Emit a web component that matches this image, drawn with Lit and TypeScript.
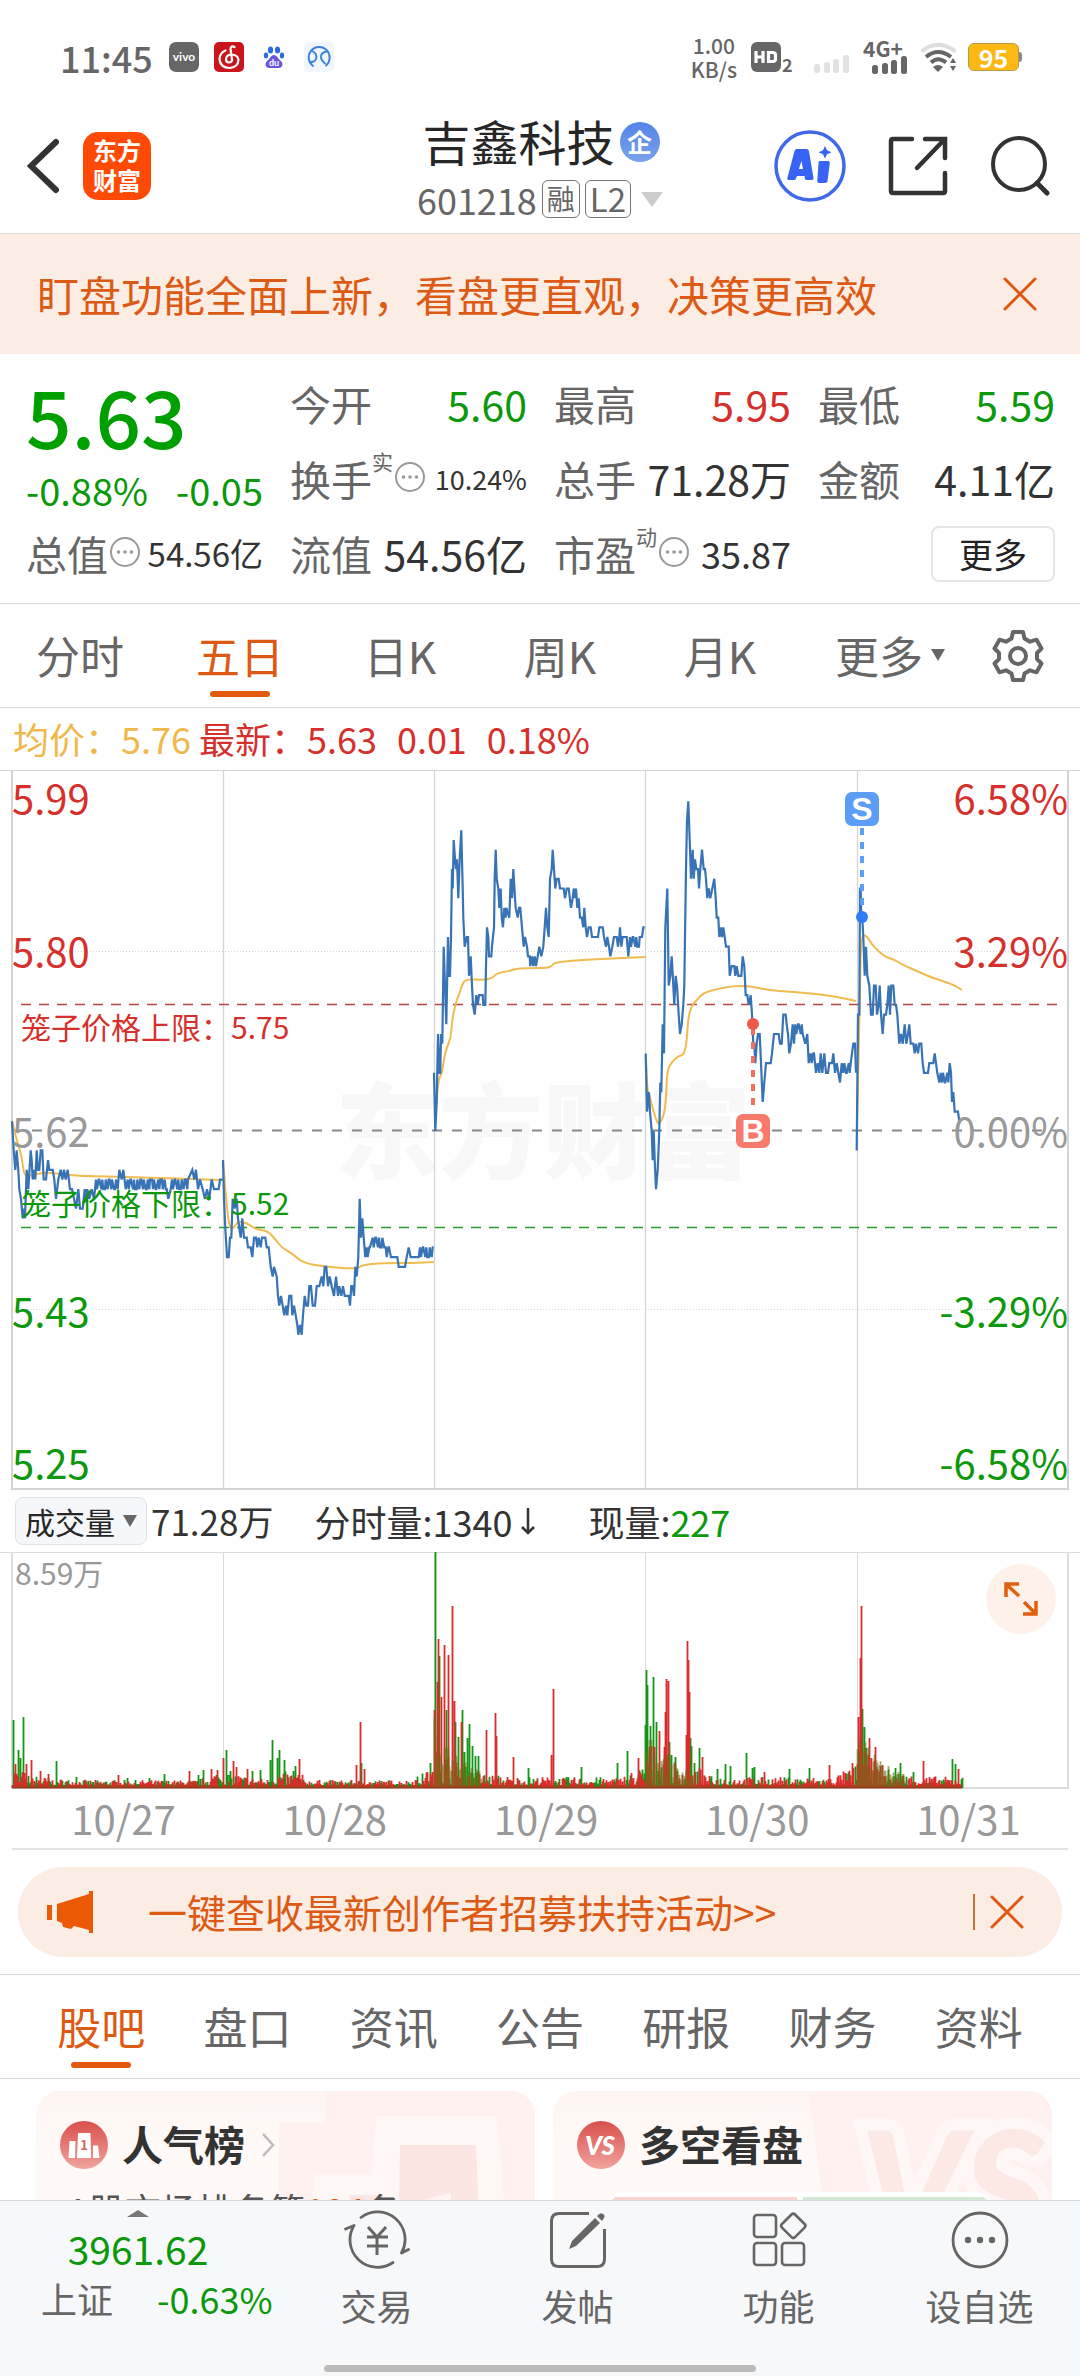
import { LitElement, html, svg, css } from "lit";
import { customElement } from "lit/decorators.js";
import { classMap } from "lit/directives/class-map.js";

interface Run {
  /** left edge of the run on the chart, in px */
  at: number;
  /** "x,tick" pairs, x in thirds of a px; "a~b,hi/lo" swings between two ticks */
  ticks: string;
}

const ZERO_Y = 361;
const TICK = 9.7;
const RED = "#d92b2b";

const DAYS: Run[][] = [
  [{ at: 0, ticks: "36,1 41,-2 46,-4 50,-2 55,-4 58,-6 63,-7 68,-9 72,-8 75,-9 80,-4 85,-6 92,-2 95,-3 98,-5 103,-4 106,-5 110,-2 114,-4 118,-4 122,-2 127,-2 131,-5 138,-5 144,-3 148,-4 158,-4 163,-5 168,-7 175,-5 182,-4 187,-5 192,-4 197,-5 203,-4 210,-6 216,-6 222,-7 228,-8 235,-6 240,-8 248,-8 254,-6 258,-7 262,-6 268,-7 275,-6 282,-7 288~354,-5/-6 358,-4 365,-5 370,-4 377,-6 383~500,-5/-6 505,-7 512,-6 516~568,-5/-6 577,-4 583,-5 588,-4 594,-6 600,-5 608,-6 615,-7 621,-6 628,-7 635,-5 642,-6 656,-6 660,-5 668,-5" }],
  [{ at: 0, ticks: "669,-3 672,-7 676,-10 681,-13 686,-13 690,-11 694,-11 698,-7 704,-8 710,-7 714,-9 718,-10 722,-11 727,-9 732,-11 740,-11 744,-12 752,-12 757,-13 762,-11 768,-11 772,-12 776,-11 782,-12 786,-11 796,-11 800,-12 806,-12 812,-14 818,-15 822,-14 830,-15 834,-17 838,-18 843,-17 848,-18 853,-19 858,-18 862,-19 868,-17 874,-17 877,-19 882,-18 887,-19 892,-20 895,-21 900,-20 905,-21 909,-19 914,-17 919,-18 924,-18 928,-16 933,-16 938,-18 945,-18 950,-16 958,-16 965,-15 970,-16 974,-14 979,-14 984,-16 989,-15 995,-16 1002,-17 1008,-15 1014,-17 1018,-16 1024,-17 1029,-16 1034,-17 1046,-17 1050,-18 1054,-16 1058,-16 1062,-17 1066,-14 1070,-15 1075,-13 1079,-7 1083,-11 1087,-9 1091,-11 1096,-13 1100~1114,-12/-13 1118~1154,-11/-12 1157~1174,-12/-13 1192,-13 1196,-14 1215,-14 1220,-13 1226,-12 1232,-13 1256,-13 1260~1302,-12/-13" }],
  [{ at: 400, ticks: "102,6 106,0 110,3 114,10 118,6 121,6 123,10 127,9 131,19 135,15 139,11 144,20 147,16 150,16 153,20 156,27 158,25 161,30 165,28 168,27 171,28 175,24 179,28 184,31 188,25 190,22 194,19 200,20 204,20 207,16 212,18 216,15 219,13 224,12 229,14 233,13 237,14 248,14 250,13 256,13 258,17 261,21 265,20 267,18 274,18 276,19 282,21 284,26 287,29 290,26 295,25 298,23 302,25 305,22 309,21 313,23 317,22 319,23 328,22 332,26 336,24 340,27 345,24 347,23 353,22 357,23 361,23 366,21 371,19 375,20 381,19 384,18 389,18 391,17 396,18 400,17 404,18 408,17 413,18 418,19 424,18 430,19 434,21 438,23 442,21 446,20 450,26 455,27 458,29 462,27 466,25 470,26 476,26 480,25 491,25 495,24 500,25 506,25 513,23 518,24 521,25 525,24 528,25 532,23 536,24 540,22 545,22 550,21 553,23 557,21 561,20 566,21 572,21 576,20 594,20 598,21 608,21 612,20 618,19 622,20 627,19 631,18 637,19 642,20 650,20 654,19 658,20 660,21 664,19 668,20 680,20 685,18 690~722,20/19 726,20 730,21 734,21" }],
  [
    { at: 400, ticks: "737,8 741,2 744,3 747,4 750,2 755,0 758,-3 761,0 764,-3 768,-6 773,-4 778,0 781,5 784,4 788,11 792,8 796,21 802,25 806,15 811,16 815,18 820,15 823,13 827,16 831,15 836,12 840,10 845,11 850,13 853,15 858,27 861,32 865,34 869,30 873,26 878,29 881,26 885,28 889,27 894,27 897,25 901,27 906,29 911,27 915,27 918,26 922,24 926,25 931,24 937,25 943,26 947,24 950,22 955,22 958,20 962,21 966,20 970,21 974,20 978,19 986,19 989,16 995,17 1003,17 1006,16 1010,17 1015,16 1020,16" },
    { at: 700, ticks: "124,16 128,18 133,17 137,14 142,14 146,13 152,14 156,12 160,9 163,9 166,7 170,9 174,10 179,10 183,7 188,3 193,5 198,7 212,7 216,8 222,10 236,10 240,9 245,9 250,12 257,12 260,11 264,10 268,8 273,9 278,11 282,9 286~312,11/10 316,9 322,10 326,7 332~345,8/7 348,6 353,7 358,6 362,8 367,6 373,8 378,6 384,6 388,7 396,7 400,8 405,6 410,7 415,6 420,5 425,7 430~456,6/7 460,9 465,9 468,6" },
  ],
  [{ at: 700, ticks: "470,-2 474,12 478,12 480,25 482,25 484,22 487,22 490,20 494,16 498,19 502,16 508,15 513,12 518,12 522,15 527,15 531,12 536,13 539,15 543,12 548,10 552,12 558,12 562,13 566,15 570,12 574,15 580,15 584,13 588,13 592,12 598,9 603,10 608,9 614,11 619,9 624,10 628,11 632,9 640,9 644,8 648,9 654,8 658,9 664,9 668,7 672,6 684,6 688,7 700,7 704,8 708,7 712,6 718,5 722,6 726~745,5/6 749,7 753,6 756,3 760,4 764,2 774,2 778,1" }],
];

const AVERAGES = [
  "12,351 16,368 22,387 24,406 30,406 45,402 60,404 80,406 133,407 187,409 223,410",
  "223,390 227,441 230,459 234,458 238,451 247,453 255,459 268,461 275,469 282,478 293,484 303,493 327,497 357,499 362,495 383,493 413,493 434,492",
  "435,356 437,323 439,308 442,303 445,282 451,268 452,250 456,232 460,222 463,212 468,209 483,210 493,208 497,203 510,201 515,199 527,198 547,198 552,196 554,193 567,191 600,189 645,187",
  "646,288 647,320 650,327 653,340 657,352 659,354 663,348 666,333 667,300 672,292 678,286 684,285 687,270 688,248 692,235 697,230 703,223 717,219 733,216 750,216 767,220 807,223 833,226 856,231",
  "857,363 860,222 861,167 865,165 868,168 873,176 885,187 893,189 903,195 917,201 930,207 952,214 962,220",
];

/** Peak volumes: x, height, r(ise) or g(fall) */
const PEAKS =
  "13,68,g 15,24,r 18,38,g 20,30,g 23,71,g 26,24,r 31,28,r 40,17,r 48,14,r 56,27,g 76,11,g 118,13,r 127,10,g 149,10,g 164,14,g 189,17,r 198,13,g 203,18,g 211,19,r 217,18,r 223,30,r 226,38,g 233,27,r 236,21,r 247,19,r 252,17,g 260,18,g 270,28,g 272,48,g 277,30,g 279,38,g 284,28,g 293,17,g 295,22,g 299,29,r 356,23,r 360,66,r 361,25,g 364,19,r 427,16,r 430,25,g 434,78,r 435,236,g 437,106,r 438,149,r 439,132,g 441,91,r 444,143,r 446,78,g 448,133,r 452,182,r 454,87,r 455,66,g 458,51,g 461,66,r 462,78,g 464,36,g 467,50,g 469,64,g 472,42,g 475,32,g 478,32,g 486,58,r 495,75,r 496,52,r 513,31,r 528,20,g 551,33,r 553,99,r 581,21,g 617,25,g 627,37,g 638,30,r 645,63,g 646,118,g 647,103,g 650,62,g 653,111,g 654,41,r 656,66,g 659,57,r 664,41,r 665,76,r 666,109,r 668,107,r 669,46,g 671,33,g 675,31,g 686,53,r 687,147,r 688,128,r 689,96,r 690,50,g 691,42,g 694,25,g 699,40,g 702,31,r 717,19,g 725,24,g 730,22,g 746,35,g 752,20,g 754,21,g 764,16,r 789,19,g 809,20,g 829,23,r 852,25,r 858,71,r 860,130,r 861,182,r 862,79,g 864,61,g 866,40,g 869,50,r 871,30,r 875,41,r 882,23,r 895,20,g 900,25,g 913,16,g 923,27,r 952,29,g 955,24,g 958,19,r";

const DAY_STARTS = [12, 223, 434, 646, 857];

function pricePath(runs: Run[]): string {
  const pts: string[] = [];
  const put = (x: number, k: number) => pts.push(`${x.toFixed(1)} ${(ZERO_Y - k * TICK).toFixed(1)}`);
  for (const run of runs) {
    for (const token of run.ticks.split(" ")) {
      const [pos, level] = token.split(",");
      if (pos.includes("~")) {
        const [from, to] = pos.split("~").map(Number);
        const [a, b] = level.split("/").map(Number);
        let high = true;
        let i = 0;
        for (let x = from; x <= to; x += [3, 5, 2, 6, 3][i++ % 5]) {
          put(run.at + x / 3, high ? a : b);
          if (i % 4 !== 2) high = !high;
        }
      } else {
        put(run.at + Number(pos) / 3, Number(level));
      }
    }
  }
  return "M" + pts.join("L");
}

function smoothPath(data: string): string {
  const p = data.split(" ").map((s) => s.split(",").map(Number));
  let d = `M${p[0][0]} ${p[0][1]}`;
  for (let i = 1; i < p.length - 1; i++) {
    d += `Q${p[i][0]} ${p[i][1]} ${(p[i][0] + p[i + 1][0]) / 2} ${(p[i][1] + p[i + 1][1]) / 2}`;
  }
  const last = p[p.length - 1];
  return d + `L${last[0]} ${last[1]}`;
}

function volumePaths(): { rise: string; fall: string; mixed: string } {
  let seed = 7;
  const rnd = () => (seed = (seed * 16807) % 2147483647) / 2147483647;
  const out = { rise: "", fall: "", mixed: "" };
  const weight = [16, 13, 50, 34, 40];
  for (let x = 12; x < 963; x += 1) {
    const day = DAY_STARTS.filter((s) => s <= x).length - 1;
    const t = x - DAY_STARTS[day];
    const late = t > 185 ? (t - 185) / 2 : 0;
    const swell = (day === 1 && t > 44 && t < 80) || (day === 3 && t < 55) ? 8 : 0;
    const base = day > 1 ? 8 : 5;
    const cap = base + weight[day] * Math.exp(-t / 20) + late + swell;
    const h = 3 + cap * Math.pow(rnd(), 1.7);
    out[rnd() > 0.45 ? "rise" : "fall"] += `M${x + 0.5} 236v${-h.toFixed(1)}`;
    if (t < 48 && day > 1) out.mixed += `M${x + 0.5} 236v${-(h * 0.8 + weight[day] * 0.5 * Math.exp(-t / 30)).toFixed(1)}`;
  }
  for (const item of PEAKS.split(" ")) {
    const [x, h, c] = item.split(",");
    out[c === "r" ? "rise" : "fall"] += `M${Number(x) + 0.5} 236v-${h}`;
  }
  return out;
}

const VOLUME = volumePaths();

const closeIcon = html`<svg class="close-icon" viewBox="0 0 34 34" aria-hidden="true">
  <path d="M2 2L32 32M32 2L2 32" fill="none" stroke="#e0570f" stroke-width="3" stroke-linecap="round" />
</svg>`;

const moreDots = html`<svg class="dots" viewBox="0 0 30 30" aria-hidden="true">
  <circle cx="15" cy="15" r="14" fill="none" stroke="#999" stroke-width="2" />
  <circle cx="8.5" cy="15" r="1.8" fill="#999" /><circle cx="15" cy="15" r="1.8" fill="#999" /><circle cx="21.5" cy="15" r="1.8" fill="#999" />
</svg>`;

const caret = html`<svg class="caret" viewBox="0 0 14 12" aria-hidden="true"><path d="M0 0h14L7 12z" fill="#666" /></svg>`;

const signal = (color: string) => html`<svg class="signal" viewBox="0 0 36 18" aria-hidden="true">
  <g fill=${color}><rect x="0" y="9" width="6" height="9" rx="2.5" /><rect x="10" y="7" width="6" height="11" rx="2.5" /><rect x="19" y="4" width="6" height="14" rx="2.5" /><rect x="29" y="0" width="6" height="18" rx="2.5" /></g>
</svg>`;

@customElement("status-bar")
class StatusBar extends LitElement {
  static styles = css`
    :host { display: flex; justify-content: space-between; align-items: center; height: 118px; padding: 0 58px 4px 60px; box-sizing: border-box; color: #666; }
    .group { display: flex; align-items: center; }
    .time { font-size: 36px; line-height: 54px; font-weight: 500; margin-right: 16px; }
    .app { width: 30px; height: 30px; margin-right: 15px; }
    .rate { font-size: 21px; line-height: 24px; font-weight: 500; text-align: center; margin-right: 14px; }
    .hd { width: 44px; height: 31px; margin-right: 19px; }
    .signal { display: block; width: 36px; height: 18px; }
    .idle { align-self: flex-end; margin: 0 13px 8px 0; }
    .mobile { margin-right: 12px; font-size: 21px; line-height: 16px; font-weight: 700; }
    .mobile .signal { margin-left: 9px; }
    .wifi { width: 38px; height: 30px; margin-right: 10px; }
    .battery { background: #fdb913; color: #fff; border-radius: 6px; width: 51px; height: 28px; line-height: 26px; font-size: 25px; font-weight: 700; text-align: center; border: 1px solid #b99a4a; box-sizing: border-box; }
    .cap { width: 3px; height: 10px; background: #888; border-radius: 0 3px 3px 0; }
  `;
  render() {
    return html`
      <div class="group">
        <span class="time">11:45</span>
        <svg class="app" viewBox="0 0 30 30"><rect width="30" height="30" rx="7" fill="#666" /><text x="15" y="19" font-size="12" font-weight="700" font-family="Lato, sans-serif" fill="#fff" text-anchor="middle">vivo</text></svg>
        <svg class="app" viewBox="0 0 30 30"><rect width="30" height="30" rx="5" fill="#c9151b" /><path d="M20.500 5Q17 3 16.500 7L18 17.500Q18 20.500 15 20.500Q12 20.300 12 17.500Q12 13 17 12.500Q24 12.500 24.500 18Q24 25.500 15.500 26Q6.500 25.500 5.500 17.500Q5.500 11 11.500 8.500" fill="none" stroke="#fff" stroke-width="2.200" stroke-linecap="round" /></svg>
        <svg class="app" viewBox="0 0 30 30"><g fill="#2a6be0"><ellipse cx="11.500" cy="8" rx="2.600" ry="3.500" /><ellipse cx="18.500" cy="8" rx="2.600" ry="3.500" /><ellipse cx="7" cy="13.500" rx="2.200" ry="3" /><ellipse cx="23" cy="13.500" rx="2.200" ry="3" /></g><path d="M15 13c3 0 4 4 7 6 3 3 1 7-2 7H10c-3 0-5-4-2-7 3-2 4-6 7-6z" fill="#6a55dd" /><text x="15" y="24" font-size="9" font-weight="700" font-family="Lato, sans-serif" fill="#fff" text-anchor="middle">du</text></svg>
        <svg class="app" viewBox="0 0 30 30"><rect width="30" height="30" rx="5" fill="#f1f6fd" /><g fill="none" stroke="#3b82dc" stroke-width="1.900" stroke-linecap="round"><path d="M9 24A10.500 10.500 0 1 1 22 23.500" /><path d="M7.500 8.500Q14 12 12 17Q10.500 20.500 6.500 20M22.500 9.500Q16 11 17 16Q17.500 19 21 21.500" /></g></svg>
      </div>
      <div class="group">
        <span class="rate">1.00<br />KB/s</span>
        <svg class="hd" viewBox="0 0 44 31"><rect width="30" height="30" rx="6" fill="#666" /><path d="M5 9v12M12 9v12M5 15h7M17.500 10.500v9h4q3 0 3-2.500v-4q0-2.500-3-2.500z" fill="none" stroke="#fff" stroke-width="3.200" /><text x="31" y="30" font-size="18" font-weight="700" fill="#666">2</text></svg>
        <span class="idle">${signal("#e2e2e2")}</span>
        <span class="mobile">4G+${signal("#666")}</span>
        <svg class="wifi" viewBox="0 0 38 30"><g fill="none" stroke-width="4"><path d="M1.500 9.500Q18 -4 35.500 9.500" stroke="#dedede" /><path d="M6 15Q18 5 31 15M11 20.500Q18 14 26 20.500" stroke="#666" /></g><path d="M13 25q5-4 10 0l-5 5zM30 21l3-5 3 5zM30 24l3 5 3-5z" fill="#666" /></svg>
        <span class="battery">95</span><span class="cap"></span>
      </div>
    `;
  }
}

@customElement("stock-header")
class StockHeader extends LitElement {
  static styles = css`
    :host { display: grid; grid-template-columns: 1fr auto 1fr; padding: 0 27px 15px; border-bottom: 1px solid #d9d9d9; }
    button { font: inherit; color: inherit; border: 0; padding: 0; background: none; display: block; }
    svg { display: block; }
    .side { display: flex; align-items: center; height: 96px; }
    .right { justify-content: flex-end; gap: 42px; padding-right: 3px; }
    .back svg { width: 33px; height: 56px; }
    .logo { margin-left: 23px; width: 68px; height: 68px; box-sizing: border-box; padding: 3px 10px; border-radius: 15px; background: #ff4a05; color: #fff; font-size: 24px; line-height: 30px; font-weight: 700; text-decoration: none; }
    h1 { margin: 0; font-size: 48px; line-height: 44px; font-weight: 400; color: #262626; display: flex; align-items: center; justify-content: center; padding-left: 2px; }
    .ent { margin-left: 5px; width: 40px; height: 40px; margin-top: 3px; border-radius: 50%; background: linear-gradient(#5583e8, #7aa2ec); color: #fff; font-size: 25px; line-height: 38px; text-align: center; font-weight: 700; }
    .sub { margin-top: 18px; display: flex; align-items: center; justify-content: center; font-size: 36px; line-height: 38px; color: #666; }
    .tag { border: 1px solid #777; border-radius: 6px; height: 36px; line-height: 34px; font-size: 28px; padding: 0 4px; margin-left: 5px; }
    .latin { font-size: 33px; }
    .drop { width: 22px; height: 15px; margin-left: 10px; }
    .ai { width: 72px; height: 72px; }
    .share, .find { width: 60px; height: 60px; }
  `;
  render() {
    return html`
      <div class="side">
        <button class="back" aria-label="返回"><svg viewBox="0 0 33 56"><path d="M29 4L4 28L29 52" fill="none" stroke="#333" stroke-width="6" stroke-linecap="round" stroke-linejoin="miter" /></svg></button>
        <a class="logo" href="#">东方财富</a>
      </div>
      <div>
        <h1>吉鑫科技<span class="ent">企</span></h1>
        <div class="sub">601218<span class="tag">融</span><span class="tag latin">L2</span>
          <svg class="drop" viewBox="0 0 22 15"><path d="M0 0h22L11 15z" fill="#ccc" /></svg></div>
      </div>
      <div class="side right">
        <button aria-label="Ai"><svg class="ai" viewBox="0 0 72 72"><circle cx="36" cy="36" r="34" fill="none" stroke="#4069ea" stroke-width="3.500" />
          <path d="M22.500 19h10q2 0 2.400 2L39.500 48q.3 2-1.500 2h-5.500q-1.500 0-1.700-2l-.3-2H23l-1 2.500Q21.500 50 20 50h-5q-2.500 0-1.500-2.500L20.500 21q.6-2 2-2zM27.500 31L24.800 39H29zM46 31h8q2 0 1.800 2L53.500 51q-.3 2-2.300 2H45q-2 0-1.700-2L44.500 33q.2-2 1.500-2zM51 16l2 4.300 4.500 2-4.500 2L51 28.500l-2-4.200-4.500-2 4.500-2z" fill="#3764f4" fill-rule="evenodd" /></svg></button>
        <button aria-label="分享"><svg class="share" viewBox="0 0 60 60"><path d="M24 3H5Q3 3 3 5V55Q3 57 5 57H55Q57 57 57 55V37M57 22V3H37M55 5L29 32" fill="none" stroke="#333" stroke-width="4.500" stroke-linecap="round" /></svg></button>
        <button aria-label="搜索"><svg class="find" viewBox="0 0 60 60"><circle cx="29" cy="28" r="26" fill="none" stroke="#333" stroke-width="4" /><path d="M47 47L57 57" stroke="#333" stroke-width="5" stroke-linecap="round" /></svg></button>
      </div>
    `;
  }
}

@customElement("quote-panel")
class QuotePanel extends LitElement {
  static styles = css`
    :host { display: grid; grid-template-columns: repeat(4, 1fr); grid-auto-rows: 75px; column-gap: 27px; padding: 12px 25px 12px 26px; border-bottom: 1px solid #d9d9d9; }
    .price { grid-row: span 2; display: flex; flex-direction: column; color: #0b980b; }
    .last { font-size: 80px; line-height: 96px; font-weight: 500; color: #009f00; }
    .change { display: flex; justify-content: space-between; font-size: 38px; line-height: 56px; white-space: nowrap; }
    .cell { display: flex; align-items: center; justify-content: space-between; font-size: 41px; line-height: 73px; color: #333; white-space: nowrap; }
    .label { display: flex; align-items: center; color: #666; }
    .note { font-size: 21px; line-height: 24px; align-self: flex-start; margin: 7px 0 0; }
    .dots { width: 30px; height: 30px; margin-left: 2px; margin-bottom: 4px; }
    .mid { font-size: 36px; } .small { font-size: 33px; } .tiny { font-size: 27px; }
    .up { color: #d6302d; } .down { color: #0b980b; }
    .more { justify-self: end; align-self: center; width: 124px; height: 56px; padding: 0; border: 2px solid #e6e6e6; border-radius: 8px; background: #fff; color: #222; font: inherit; font-size: 34px; line-height: 48px; }
  `;
  private cell(label: string, value: string, tone = "", note = "", dots = false) {
    return html`<div class="cell"><span class="label">${label}${note ? html`<span class="note">${note}</span>` : ""}${dots ? moreDots : ""}</span><span class=${tone}>${value}</span></div>`;
  }
  render() {
    return html`
      <div class="price"><span class="last">5.63</span><span class="change"><span>-0.88%</span><span>-0.05</span></span></div>
      ${this.cell("今开", "5.60", "down")} ${this.cell("最高", "5.95", "up")} ${this.cell("最低", "5.59", "down")}
      ${this.cell("换手", "10.24%", "tiny", "实", true)} ${this.cell("总手", "71.28万")} ${this.cell("金额", "4.11亿")}
      ${this.cell("总值", "54.56亿", "small", "", true)} ${this.cell("流值", "54.56亿")} ${this.cell("市盈", "35.87", "mid", "动", true)}
      <button class="more">更多</button>
    `;
  }
}

@customElement("price-chart")
class PriceChart extends LitElement {
  static styles = css`
    :host { display: block; }
    svg { display: block; width: 100%; height: auto; font-size: 40px; }
    .mark { font-size: 104px; font-weight: 900; fill: #f8f8f8; }
    .cage { font-size: 30px; }
    .pin { font-size: 32px; font-weight: 700; fill: #fff; font-family: "Liberation Sans", sans-serif; }
    .up { fill: #d6302d; } .down { fill: #0b980b; } .flat { fill: #999; }
  `;
  render() {
    const scale: [number, string, string, string][] = [
      [44, "5.99", "6.58%", "up"], [197, "5.80", "3.29%", "up"], [377, "5.62", "0.00%", "flat"],
      [557, "5.43", "-3.29%", "down"], [709, "5.25", "-6.58%", "down"],
    ];
    return html`<svg viewBox="0 0 1080 720" role="img" aria-label="五日">
      <text class="mark" x="543" y="401" text-anchor="middle">东方财富</text>
      <g stroke="#d4d4d4" fill="none">
        <path d="M0 .5H1080" /><path d="M12 .5V719H1068V.5" stroke-width="2" />
        <path d="M223.500 1V719M434.500 1V719M645.500 1V719M857.500 1V719" stroke-width="1.300" />
        <path d="M12 181.500H1068M12 539.500H1068" stroke-dasharray="1 2" />
      </g>
      <path d="M12 360.500H1062" stroke="#888" stroke-width="1.800" stroke-dasharray="10 10" />
      <path d="M21 234.500H1058" stroke="#b8433f" stroke-width="1.500" stroke-dasharray="10 8" />
      <path d="M21 457.500H1058" stroke="#2c9a2c" stroke-width="1.500" stroke-dasharray="10 8" />
      <g fill="none" stroke="#f0bb4f" stroke-width="2">${AVERAGES.map((a) => svg`<path d=${smoothPath(a)} />`)}</g>
      <g fill="none" stroke="#3873b5" stroke-width="2.200">${DAYS.map((d) => svg`<path d=${pricePath(d)} />`)}</g>
      ${scale.map(([y, l, r, tone]) => svg`<text class=${tone} x="12" y=${y}>${l}</text><text class=${tone} x="1068" y=${y} text-anchor="end">${r}</text>`)}
      <text class="cage up" x="21" y="269">笼子价格上限：5.75</text>
      <text class="cage down" x="21" y="445">笼子价格下限：5.52</text>
      <path d="M862 58V146" stroke="#5c9df8" stroke-width="4" stroke-dasharray="7 7" />
      <circle cx="862" cy="147" r="6" fill="#2b7cf6" />
      <rect x="845" y="22" width="34" height="34" rx="7" fill="#5c9df8" /><text class="pin" x="862" y="50" text-anchor="middle">S</text>
      <path d="M753 258V342" stroke="#f2705f" stroke-width="4" stroke-dasharray="7 7" />
      <circle cx="753" cy="254" r="6" fill="#f0594a" />
      <rect x="736" y="344" width="34" height="34" rx="7" fill="#f77a6a" /><text class="pin" x="753" y="372" text-anchor="middle">B</text>
    </svg>`;
  }
}

@customElement("volume-chart")
class VolumeChart extends LitElement {
  static styles = css`
    :host { display: block; }
    button { font: inherit; padding: 0; }
    .row { display: flex; align-items: center; height: 62px; padding: 0 15px; font-size: 36px; line-height: 60px; color: #333; white-space: nowrap; }
    .row > * { flex: none; }
    .kind { display: flex; align-items: center; justify-content: center; gap: 8px; width: 132px; height: 48px; box-sizing: border-box; margin-right: 4px; border: 1px solid #dfe3e8; border-radius: 8px; background: #f5f7fa; color: #262626; font-size: 30px; line-height: 44px; }
    .caret { width: 14px; height: 12px; }
    .total { font-size: 35px; }
    .minute { margin-left: 41px; }
    .now { margin-left: 52px; }
    .fall { width: 16px; height: 28px; margin-left: 8px; }
    .down { color: #0b980b; }
    .plot { position: relative; }
    .plot > svg { display: block; width: 100%; height: auto; }
    .top { font-size: 30px; fill: #999; }
    .expand { position: absolute; top: 12px; right: 24px; width: 70px; height: 70px; border: 0; border-radius: 50%; background: #fef1e9; display: flex; align-items: center; justify-content: center; }
    .expand svg { width: 34px; height: 36px; }
    .dates { display: grid; grid-template-columns: repeat(5, 1fr); margin: 0 12px; height: 58px; line-height: 56px; font-size: 40px; color: #999; text-align: center; border-bottom: 2px solid #e2e2e2; }
    .dates span { padding-left: 12px; }
  `;
  render() {
    return html`
      <div class="row">
        <button class="kind">成交量${caret}</button><span class="total">71.28万</span>
        <span class="minute">分时量:1340</span>
        <svg class="fall" viewBox="0 0 16 28"><path d="M8 1V26M2 20L8 26L14 20" fill="none" stroke="#333" stroke-width="2.500" /></svg>
        <span class="now">现量:<span class="down">227</span></span>
      </div>
      <div class="plot">
        <svg viewBox="0 0 1080 238" role="img" aria-label="成交量">
          <g fill="none" stroke="#dcdcdc"><path d="M0 .5H1080" /><path d="M12 0V236H1068V0" stroke-width="2" /><path d="M223.500 0V236M434.500 0V236M645.500 0V236M857.500 0V236" /></g>
          <g fill="none" stroke-width="1.800">
            <path d=${VOLUME.fall} stroke="#149414" />
            <path d=${VOLUME.rise} stroke=${RED} />
            <path d=${VOLUME.mixed} stroke="#6f6a14" stroke-opacity=".6" />
          </g>
          <path d="M12 235.500H962" stroke="#9a3a1c" stroke-width="2" />
          <text class="top" x="15" y="33">8.59万</text>
        </svg>
        <button class="expand" aria-label="全屏"><svg viewBox="0 0 34 36"><path d="M2 16V3H15M3 4L15 15M32 20V33H19M31 32L20 21" fill="none" stroke="#e0600f" stroke-width="3.500" /></svg></button>
      </div>
      <div class="dates">${["10/27", "10/28", "10/29", "10/30", "10/31"].map((d) => html`<span>${d}</span>`)}</div>
    `;
  }
}

@customElement("insight-cards")
class InsightCards extends LitElement {
  static styles = css`
    :host { display: grid; grid-template-columns: 1fr 1fr; gap: 18px; padding: 12px 28px 0 36px; }
    .card { position: relative; height: 240px; border-radius: 24px; overflow: hidden; background: linear-gradient(#fef5f3, #fffaf7 60px); }
    .art { position: absolute; top: 0; right: 0; width: 260px; height: 120px; }
    .head { position: relative; display: flex; align-items: center; height: 108px; padding-left: 24px; }
    .head > svg { width: 48px; height: 48px; }
    h2 { margin: 0 0 0 14px; font-size: 41px; line-height: 48px; padding-bottom: 4px; font-weight: 700; color: #333; }
    .head .go { width: 14px; height: 24px; margin-left: 16px; }
    .text { position: relative; padding-left: 31px; font-size: 36px; line-height: 40px; color: #555; margin: -10px 0 0; }
    .rank { color: #e0570f; }
    .bar { position: relative; display: flex; gap: 6px; margin: -7px 56px 0 50px; padding-top: 3px; border: 2px solid #fff; background: #fff; border-radius: 24px; overflow: hidden; height: 40px; }
    .bull, .bear { flex: 1; } .bull { background: #f9d4d0; } .bear { background: #d5e8d6; }
    .vs { font-size: 26px; font-weight: 900; font-style: italic; fill: #fff; font-family: Lato, sans-serif; }
    .big { font-size: 160px; font-weight: 900; font-style: italic; fill: #fce8e5; font-family: Lato, sans-serif; stroke: #fef7f5; stroke-width: 24px; paint-order: stroke; }
  `;
  render() {
    return html`
      <article class="card">
        <svg class="art" viewBox="0 0 260 120"><path d="M4 120V32H50V0H260V120z" fill="#fef1ef" /><path d="M38 120V84H96L101 25H222L230 120z" fill="#fef7f5" /><path d="M74 120V104H108V120zM124 120L125 54H201L204 120z" fill="#fbe6e4" /><path d="M136 120V112L176 102V120z" fill="#fef5f3" /></svg>
        <div class="head">
          <svg viewBox="0 0 48 48"><defs><linearGradient id="g" x2="0" y2="1"><stop stop-color="#d8504c" /><stop offset="1" stop-color="#f2a39d" /></linearGradient></defs><circle cx="24" cy="24" r="24" fill="url(#g)" /><path d="M9.500 20H15.500L15 37H8.500zM18 12H30.500L31 37H17zM33 24.500H38L39.500 37H33z" fill="#fff" /><text x="24" y="29" font-size="13" font-weight="700" fill="#d9605b" text-anchor="middle">1</text></svg>
          <h2>人气榜</h2>
          <svg class="go" viewBox="0 0 14 24"><path d="M2 1L12 12L2 23" fill="none" stroke="#bbb" stroke-width="2.500" /></svg>
        </div>
        <p class="text">A股市场排名第<span class="rank">104</span>名</p>
      </article>
      <article class="card">
        <svg class="art" viewBox="0 0 260 120"><path d="M17 0H260V120H32z" fill="#fef1ef" /><text class="big" x="68" y="156">VS</text></svg>
        <div class="head">
          <svg viewBox="0 0 48 48"><defs><linearGradient id="h" x2="0" y2="1"><stop stop-color="#d8504c" /><stop offset="1" stop-color="#f2a39d" /></linearGradient></defs><circle cx="24" cy="24" r="24" fill="url(#h)" /><text class="vs" x="23" y="34" text-anchor="middle">VS</text></svg>
          <h2>多空看盘</h2>
        </div>
        <div class="bar"><span class="bull"></span><span class="bear"></span></div>
      </article>
    `;
  }
}

@customElement("bottom-nav")
class BottomNav extends LitElement {
  static styles = css`
    :host { display: block; background: #f7f8fa; border-top: 1px solid #d5d6d8; }
    nav { display: grid; grid-template-columns: 276fr repeat(4, 201fr); height: 164px; }
    button { font: inherit; border: 0; padding: 0; background: none; color: #666; display: flex; flex-direction: column; align-items: center; font-size: 36px; line-height: 46px; white-space: nowrap; }
    .tool { padding-top: 9px; }
    .tool svg { width: 66px; height: 60px; margin-bottom: 12px; }
    .index { padding-top: 9px; align-items: stretch; }
    .index .tri, .index .value { align-self: center; }
    .tri { width: 22px; height: 7px; }
    .value { font-size: 39px; line-height: 62px; color: #0b980b; }
    .line { display: flex; gap: 44px; line-height: 38px; padding-left: 41px; }
    .down { color: #0b980b; }
    .home { width: 40%; height: 7px; margin: 0 auto 4px; border-radius: 4px; background: #bbb; }
  `;
  render() {
    const line = (shape: unknown) => html`<svg viewBox="0 0 66 60" fill="none" stroke="#666" stroke-width="3">${shape}</svg>`;
    const tools: [string, unknown][] = [
      ["交易", svg`<path d="M17 7.500A27.500 27.500 0 0 1 57.500 43L64.500 39.500M49 52.500A27.500 27.500 0 0 1 10 15.500L1.500 19" stroke-width="2.800" stroke-linecap="round" stroke-linejoin="round" /><path d="M24 17L33 27L42 17M33 27V45M23 27H44M23 36H44" />`],
      ["发帖", svg`<path d="M44 3.500H14Q6.500 3.500 6.500 11V49Q6.500 56.500 14 56.500H52Q59.500 56.500 59.500 49V19" /><path d="M24 39L27 31L50 8L55 13L31 36z" fill="#666" stroke="none" /><path d="M52 6L55 3.500Q60 3 59.500 7L57 11z" fill="#666" stroke="none" />`],
      ["功能", svg`<rect x="8" y="5" width="22" height="22" rx="3" stroke-width="2.600" /><rect x="8" y="33" width="22" height="22" rx="3" stroke-width="2.600" /><rect x="36" y="33" width="22" height="22" rx="3" stroke-width="2.600" /><rect x="38" y="6.500" width="18.500" height="18.500" rx="2.500" transform="rotate(45 47.200 15.800)" stroke-width="2.600" />`],
      ["设自选", svg`<circle cx="33" cy="30" r="27" stroke-width="2.800" /><g fill="#666" stroke="none"><circle cx="21" cy="30" r="3.200" /><circle cx="33" cy="30" r="3.200" /><circle cx="45" cy="30" r="3.200" /></g>`],
    ];
    return html`
      <nav>
        <button class="index">
          <svg class="tri" viewBox="0 0 22 7"><path d="M0 7L11 0L22 7z" fill="#777" /></svg>
          <span class="value">3961.62</span>
          <span class="line"><span>上证</span><span class="down">-0.63%</span></span>
        </button>
        ${tools.map(([label, shape]) => html`<button class="tool">${line(shape)}<span>${label}</span></button>`)}
      </nav>
      <div class="home"></div>
    `;
  }
}

@customElement("app-root")
class AppRoot extends LitElement {
  static styles = css`
    :host { display: flex; flex-direction: column; height: 100vh; overflow: hidden; background: #fff; font-family: "Noto Sans CJK SC", "Noto Sans", sans-serif; }
    button { font: inherit; color: inherit; border: 0; padding: 0; background: none; }
    .close-icon { display: block; width: 34px; height: 34px; }
    .banner { display: flex; align-items: center; justify-content: space-between; flex: none; height: 120px; padding: 0 43px 0 37px; background: #fcede4; color: #dd5a14; font-size: 42px; line-height: 60px; white-space: nowrap; }
    .tabs { display: grid; flex: none; height: 103px; border-bottom: 1px solid #d9d9d9; color: #666; font-size: 44px; }
    .periods { grid-template-columns: repeat(6, 160fr) 120fr; }
    .sections { grid-template-columns: repeat(7, 1fr); padding: 0 28px; border-top: 1px solid #d9d9d9; margin-top: 17px; }
    .tab { display: flex; flex-direction: column; align-items: center; line-height: 64px; padding-top: 19px; white-space: nowrap; }
    .tab.on { color: #dd5a14; }
    .tab.on::after { content: ""; width: 60px; height: 6px; border-radius: 3px; background: #e35a0c; margin-top: 4px; }
    .menu { display: flex; align-items: center; justify-content: center; gap: 8px; padding: 0 0 2px 20px; }
    .caret { width: 14px; height: 12px; }
    .gear svg { display: block; width: 52px; height: 52px; }
    .gear { display: flex; align-items: center; padding-left: 32px; }
    .legend { display: flex; flex: none; align-items: center; height: 62px; padding: 0 13px 2px; box-sizing: border-box; font-size: 36px; line-height: 58px; color: #d6302d; white-space: nowrap; }
    .avg { color: #f0b849; margin-right: 8px; }
    .delta { margin-left: 20px; }
    price-chart, volume-chart, status-bar, stock-header, quote-panel, bottom-nav { flex: none; }
    .promo { display: flex; flex: none; align-items: center; height: 90px; margin: 17px 18px 0; padding: 0 38px 0 28px; border-radius: 45px; background: #fcede4; color: #dd5a14; font-size: 39px; line-height: 60px; white-space: nowrap; }
    .horn { width: 48px; height: 42px; margin-right: 54px; }
    .promo a { color: inherit; text-decoration: none; flex: 1; padding-bottom: 2px; }
    .promo button { border-left: 2px solid #c9703c; padding-left: 15px; height: 36px; }
    .feed { flex: 1 1 0; min-height: 0; overflow: hidden; }
  `;
  render() {
    const periods = ["分时", "五日", "日K", "周K", "月K"];
    const sections = ["股吧", "盘口", "资讯", "公告", "研报", "财务", "资料"];
    const tab = (name: string, on: boolean) => html`<button class=${classMap({ tab: true, on })}>${name}</button>`;
    return html`
      <status-bar></status-bar>
      <stock-header></stock-header>
      <div class="banner"><span>盯盘功能全面上新，看盘更直观，决策更高效</span><button aria-label="关闭">${closeIcon}</button></div>
      <quote-panel></quote-panel>
      <div class="tabs periods">
        ${periods.map((p) => tab(p, p === "五日"))}
        <button class="menu">更多${caret}</button>
        <button class="gear" aria-label="设置"><svg viewBox="0 0 52 52"><path d="M21 2H31L32.500 8.500L38 11.700L44.500 9.700L49.500 18.500L45 23V29L49.500 33.500L44.500 42.300L38 40.300L32.500 43.500L31 50H21L19.500 43.500L14 40.300L7.500 42.300L2.500 33.500L7 29V23L2.500 18.500L7.500 9.700L14 11.700L19.500 8.500z" fill="none" stroke="#666" stroke-width="4" stroke-linejoin="round" /><circle cx="26" cy="26" r="8" fill="none" stroke="#666" stroke-width="4" /></svg></button>
      </div>
      <div class="legend"><span class="avg">均价：5.76</span><span>最新：5.63</span><span class="delta">0.01</span><span class="delta">0.18%</span></div>
      <price-chart></price-chart>
      <volume-chart></volume-chart>
      <div class="promo">
        <svg class="horn" viewBox="0 0 48 42"><path d="M1 14H6V29H1zM11 13L43 3V0H47V42H43V39L28 35L25 38L17 36L16 32L11 30z" fill="#eb5905" /></svg>
        <a href="#">一键查收最新创作者招募扶持活动&gt;&gt;</a>
        <button aria-label="关闭">${closeIcon}</button>
      </div>
      <div class="tabs sections">${sections.map((s) => tab(s, s === "股吧"))}</div>
      <div class="feed"><insight-cards></insight-cards></div>
      <bottom-nav></bottom-nav>
    `;
  }
}
